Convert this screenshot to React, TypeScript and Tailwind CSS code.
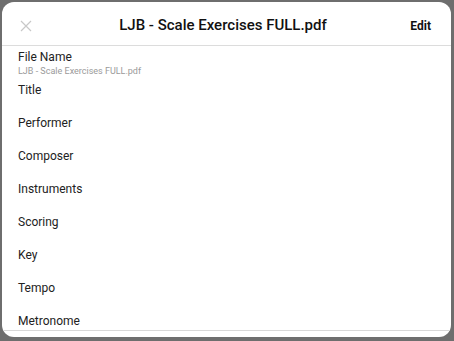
const fields = [
  'Title',
  'Performer',
  'Composer',
  'Instruments',
  'Scoring',
  'Key',
  'Tempo',
  'Metronome',
]

export default function App() {
  return (
    <div
      className="w-[454px] h-[341px] bg-[#6e6e6e] pl-[2px] pt-[2px] pr-[3px] pb-[4px] overflow-hidden"
      style={{ fontFamily: 'Roboto, "Noto Sans", sans-serif' }}
    >
      <div className="h-full bg-white rounded-[12px] overflow-hidden flex flex-col">
        {/* header */}
        <div className="h-[44px] shrink-0 flex items-center pt-[4px] px-[16px] border-b border-[#dcdcdc]">
          <div className="w-[40px] flex items-center">
            <svg width="12" height="12" viewBox="0 0 12 12" className="ml-[2px]">
              <path d="M1 1L11 11M11 1L1 11" stroke="#c8c8c8" strokeWidth="1.2" />
            </svg>
          </div>
          <h1 className="flex-1 text-center text-[15px] font-medium text-[#111] pr-[7px]">
            LJB - Scale Exercises FULL.pdf
          </h1>
          <button className="w-[40px] text-right text-[12px] font-bold text-[#111] pr-[4px]">
            Edit
          </button>
        </div>

        {/* body */}
        <div className="flex-1 min-h-0 px-[16px] pt-[4px]">
          <p className="text-[12px] leading-[14px] text-[#222]">File Name</p>
          <p className="text-[9px] leading-[12px] text-[#9a9a9a] mt-[1px]">
            LJB - Scale Exercises FULL.pdf
          </p>
          <div className="mt-[6px]">
            {fields.map((f) => (
              <div key={f} className="h-[33px] text-[12px] leading-[14px] text-[#222]">
                {f}
              </div>
            ))}
          </div>
        </div>
        <div className="h-[7px] shrink-0 border-t border-[#d8d8d8]" />
      </div>
    </div>
  )
}
